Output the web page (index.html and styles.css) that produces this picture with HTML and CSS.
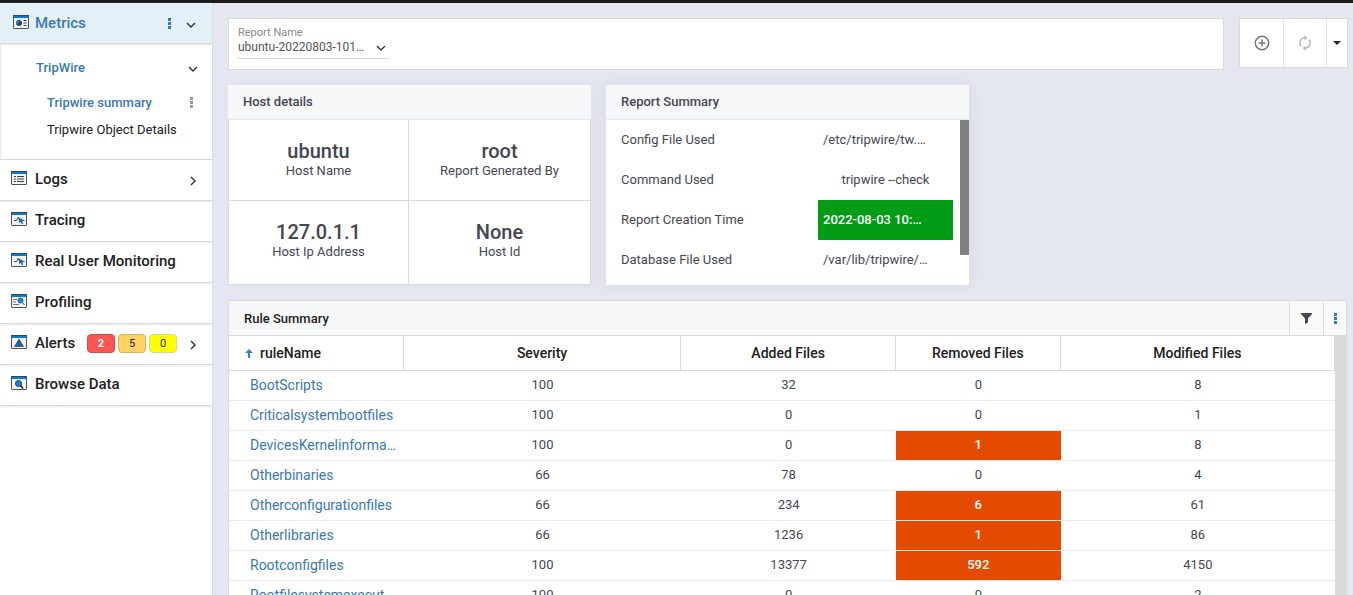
FILE: index.html
```html
<!DOCTYPE html>
<html lang="en">
<head>
<meta charset="utf-8">
<title>Tripwire summary</title>
<link rel="stylesheet" href="styles.css">
</head>
<body>
<svg width="0" height="0" class="defs" aria-hidden="true">
  <symbol id="window" viewBox="0 0 16 14">
    <rect x=".5" y=".5" width="15" height="13" rx=".5" fill="#f4f4f4" stroke="#4a555c"/>
    <rect x="1" y="1" width="14" height="2" fill="#0a78d4"/>
    <path d="M0 .5h16" stroke="#2c4a66"/>
  </symbol>
  <symbol id="down" viewBox="0 0 10 10"><path d="M1 3l4 4 4-4" fill="none" stroke="currentColor" stroke-width="1.4"/></symbol>
  <symbol id="right" viewBox="0 0 10 10"><path d="M3 1l4 4-4 4" fill="none" stroke="currentColor" stroke-width="1.4"/></symbol>
  <symbol id="dots" viewBox="0 0 3 11"><path d="M0 0h3v3H0zM0 4h3v3H0zM0 8h3v3H0z" fill="currentColor" rx="1"/></symbol>
  <symbol id="pulse" viewBox="0 0 16 14"><use href="#window"/><path d="M3 8.500h2.500L7.500 5l1.500 4M11.500 8.500H13.500" fill="none" stroke="#37424a"/><path d="M7.500 5.500l6 3-2.200.7.900 2.600-1.400.5-1-2.500-1.500 1.500z" fill="#1767b3"/></symbol>
</svg>
<div class="topbar"></div>
<div class="app">
  <nav class="sidebar">
    <div class="item active">
      <svg class="icon" viewBox="0 0 16 14"><use href="#window"/><circle cx="6" cy="8" r="3" fill="#37424a"/><path d="M6 8V5a3 3 0 0 0-2.600 4.500z" fill="#1685df"/><path d="M10.500 5.500h3M10.500 8h3M10.500 10.500h3" stroke="#37424a"/></svg>
      <a href="#">Metrics</a>
      <button class="plain" aria-label="Metrics options"><svg class="dots"><use href="#dots"/></svg></button>
      <button class="plain chev" aria-label="Collapse Metrics"><svg class="arrow"><use href="#down"/></svg></button>
    </div>
    <div class="submenu">
      <div class="group"><a href="#">TripWire</a><button class="plain chev" aria-label="Collapse TripWire"><svg class="arrow"><use href="#down"/></svg></button></div>
      <div class="leaf current"><a href="#">Tripwire summary</a><button class="plain muted" aria-label="Tripwire summary options"><svg class="dots"><use href="#dots"/></svg></button></div>
      <div class="leaf"><a href="#">Tripwire Object Details</a></div>
    </div>
    <div class="item">
      <svg class="icon" viewBox="0 0 16 14"><use href="#window"/><path d="M3 5.500h2M6 5.500h7M3 8h2M6 8h7M3 10.500h2M6 10.500h7" stroke="#37424a"/></svg>
      <a href="#">Logs</a>
      <button class="plain chev" aria-label="Expand Logs"><svg class="arrow"><use href="#right"/></svg></button>
    </div>
    <div class="item"><svg class="icon"><use href="#pulse"/></svg><a href="#">Tracing</a></div>
    <div class="item"><svg class="icon"><use href="#pulse"/></svg><a href="#">Real User Monitoring</a></div>
    <div class="item">
      <svg class="icon" viewBox="0 0 16 14"><use href="#window"/><path d="M2 5.500h4M2 8h3M2 10.500h6" stroke="#6c757b"/><circle cx="9.500" cy="6.500" r="2.700" fill="#1685df" stroke="#37688f" stroke-width=".6"/><path d="M11.500 8.500l2 2.500" stroke="#37424a"/></svg>
      <a href="#">Profiling</a>
    </div>
    <div class="item">
      <svg class="icon" viewBox="0 0 16 14"><use href="#window"/><path d="M8 4l4.500 7.500h-9z" fill="#0a70c8" stroke="#37424a" stroke-width=".7"/><path d="M8 7v4.500" stroke="#37424a"/></svg>
      <a href="#">Alerts</a>
      <span class="badges"><span class="badge red">2</span><span class="badge amber">5</span><span class="badge yellow">0</span></span>
      <button class="plain chev" aria-label="Expand Alerts"><svg class="arrow"><use href="#right"/></svg></button>
    </div>
    <div class="item">
      <svg class="icon" viewBox="0 0 16 14"><use href="#window"/><circle cx="7.500" cy="7.500" r="3" fill="#1685df" stroke="#173f60"/><path d="M9.500 9.500l2.500 3" stroke="#1f2a32" stroke-width="1.600"/></svg>
      <a href="#">Browse Data</a>
    </div>
  </nav>
  <main class="main">
    <div class="toolbar">
      <div class="filters">
        <div class="field">
          <label for="report">Report Name</label>
          <div class="picker">
            <select id="report"><option>ubuntu-20220803-101…</option></select>
            <svg class="arrow"><use href="#down"/></svg>
          </div>
        </div>
      </div>
      <div class="actions">
        <button aria-label="Add"><svg width="16" height="16" viewBox="0 0 16 16" fill="none" stroke="#757575" stroke-width="1.500"><circle cx="8" cy="8" r="6.700"/><path d="M8 4.500v7M4.500 8h7"/></svg></button>
        <button aria-label="Refresh"><svg width="14" height="16" viewBox="0 0 14 16"><path d="M3.200 11.500A5.200 5.200 0 0 1 7 2.800M10.800 4.500A5.200 5.200 0 0 1 7 13.200" fill="none" stroke="#bdbdbd" stroke-width="1.600"/><path d="M6.500 0L9.500 2.800l-3 2.800zM7.500 10.400l-3 2.800 3 2.800z" fill="#bdbdbd"/></svg></button>
        <button class="narrow" aria-label="More actions"><svg width="8" height="4" viewBox="0 0 8 4"><path d="M0 0h8L4 4z" fill="#222b30"/></svg></button>
      </div>
    </div>
    <div class="cards">
      <section class="card host">
        <h2>Host details</h2>
        <dl class="facts">
          <div><dd>ubuntu</dd><dt>Host Name</dt></div>
          <div><dd>root</dd><dt>Report Generated By</dt></div>
          <div><dd>127.0.1.1</dd><dt>Host Ip Address</dt></div>
          <div><dd>None</dd><dt>Host Id</dt></div>
        </dl>
      </section>
      <section class="card">
        <h2>Report Summary</h2>
        <div class="summary">
          <dl class="pairs">
            <div><dt>Config File Used</dt><dd>/etc/tripwire/tw.…</dd></div>
            <div><dt>Command Used</dt><dd class="middle">tripwire --check</dd></div>
            <div><dt>Report Creation Time</dt><dd class="ok">2022-08-03 10:…</dd></div>
            <div><dt>Database File Used</dt><dd>/var/lib/tripwire/…</dd></div>
          </dl>
          <div class="scroll"><div class="thumb"></div></div>
        </div>
      </section>
    </div>
    <section class="rules">
      <header>
        <h2>Rule Summary</h2>
        <button aria-label="Filter"><svg width="11" height="11" viewBox="0 0 11 11"><path d="M0 0h11v1L7 5.500V9.500L4 11V5.500L0 1z" fill="#464652"/></svg></button>
        <button class="narrow" aria-label="Rule Summary options"><svg class="dots"><use href="#dots"/></svg></button>
      </header>
      <div class="tablewrap">
        <table>
          <colgroup><col class="c-name"><col class="c-sev"><col class="c-add"><col class="c-rem"><col class="c-mod"></colgroup>
          <thead><tr><th><svg class="sort" width="8" height="9" viewBox="0 0 8 9"><path d="M4 0l4 4H5v5H3V4H0z" fill="#3d7fbd"/></svg>ruleName</th><th>Severity</th><th>Added Files</th><th>Removed Files</th><th>Modified Files</th></tr></thead>
          <tbody>
            <tr><td><a href="#">BootScripts</a></td><td>100</td><td>32</td><td>0</td><td>8</td></tr>
            <tr><td><a href="#">Criticalsystembootfiles</a></td><td>100</td><td>0</td><td>0</td><td>1</td></tr>
            <tr><td><a href="#">DevicesKernelinforma…</a></td><td>100</td><td>0</td><td class="hot">1</td><td>8</td></tr>
            <tr><td><a href="#">Otherbinaries</a></td><td>66</td><td>78</td><td>0</td><td>4</td></tr>
            <tr><td><a href="#">Otherconfigurationfiles</a></td><td>66</td><td>234</td><td class="hot">6</td><td>61</td></tr>
            <tr><td><a href="#">Otherlibraries</a></td><td>66</td><td>1236</td><td class="hot">1</td><td>86</td></tr>
            <tr><td><a href="#">Rootconfigfiles</a></td><td>100</td><td>13377</td><td class="hot">592</td><td>4150</td></tr>
            <tr><td><a href="#">Rootfilesystemexecut</a></td><td>100</td><td>0</td><td>0</td><td>2</td></tr>
          </tbody>
        </table>
        <div class="track"></div>
      </div>
    </section>
  </main>
</div>
</body>
</html>
```
FILE: styles.css
```css
* { box-sizing: border-box; }
body {
  margin: 0;
  height: 100vh;
  display: flex;
  flex-direction: column;
  overflow: hidden;
  background: #e4e7ef;
  color: #464652;
  font: 13px/16px Roboto, sans-serif;
}
.defs { position: absolute; }
a { color: inherit; text-decoration: none; }
h2, dl, dd { margin: 0; }
button {
  display: flex;
  align-items: center;
  justify-content: center;
  padding: 0;
  border: 0;
  background: none;
  color: inherit;
}
.topbar { flex: 0 0 3px; background: #1c1c1c; }
.app { flex: 1; display: flex; min-height: 0; }

.sidebar {
  flex: 0 0 213px;
  background: #fff;
  border-right: 1px solid #dadada;
  color: #212121;
}
.item {
  display: flex;
  align-items: center;
  height: 41px;
  padding: 0 14px 2px 11px;
  border-bottom: 1px solid #d8d8d8;
  box-shadow: 0 1px 2px #e8e8e8;
  font-size: 15px;
  font-weight: 500;
}
.item.active { background: #e3f0f7; color: #3a78b5; padding: 0 14px 0 13px; }
.icon { width: 16px; height: 14px; flex: none; margin: 0 8px 2px 0; }
.item.active .icon { margin-right: 6px; }
.item a, .group a, .leaf a { margin-right: auto; }
.arrow { width: 10px; height: 10px; }
.dots { width: 3px; height: 11px; }
.chev { color: #303030; }
.item .chev { padding-top: 4px; }
.item.active .chev { margin-left: 15px; margin-right: 2px; }
.badges { display: flex; gap: 3px; margin-right: 11px; }
.badge {
  width: 28px;
  height: 19px;
  border: 1px solid;
  border-radius: 4px;
  font-size: 11px;
  font-weight: 400;
  line-height: 17px;
  text-align: center;
}
.badge.red { background: #fb5750; border-color: #d84b45; color: #fff; font-weight: 700; }
.badge.amber { background: #ffd261; border-color: #d9b354; color: #212121; }
.badge.yellow { background: #ff0; border-color: #d6d68a; color: #212121; }
.submenu {
  padding: 4px 14px 16px 35px;
  border-left: 1px solid #e4e7f5;
  border-bottom: 1px solid #d8d8d8;
}
.group, .leaf { display: flex; align-items: center; height: 27px; }
.group { height: 40px; margin-bottom: 1px; color: #3a78b5; font-weight: 500; }
.group .chev { padding-top: 2px; }
.leaf { padding: 0 5px 0 11px; }
.current { color: #3a78b5; font-weight: 500; }
.muted { color: #9a9a9a; }

.main {
  flex: 1;
  min-width: 0;
  display: flex;
  flex-direction: column;
  gap: 15px;
  padding: 15px 6px 0 15px;
}
.toolbar { display: flex; gap: 15px; align-items: flex-start; margin-right: -1px; }
.filters, .actions { background: #fff; border: 1px solid #dadada; }
.filters { flex: 1; height: 52px; padding: 6px 9px; }
.field { width: 152px; border-bottom: 1px solid #d8d8d8; }
.field label { display: block; font-size: 11px; line-height: 15px; color: #8a8a8a; }
.picker { display: flex; align-items: center; padding-bottom: 3px; }
.picker select {
  flex: 1;
  min-width: 0;
  appearance: none;
  border: 0;
  padding: 0;
  background: none;
  color: #555;
  font: 12px/15px Roboto, sans-serif;
}
.picker .arrow { margin-right: 4px; color: #333; }
.actions { display: flex; height: 50px; }
.actions button { width: 43px; }
.actions button + button { border-left: 1px solid #e2e2e2; }
.actions .narrow { width: 21px; }

.cards { display: grid; grid-template-columns: repeat(3, 1fr); gap: 15px; }
.card { background: #fff; box-shadow: 0 0 14px rgba(0, 0, 0, 0.07); }
.host { box-shadow: 2px 0 12px rgba(0, 0, 0, 0.03); }
h2 { font-size: 13px; font-weight: 500; }
.card h2 {
  height: 35px;
  padding: 0 15px;
  line-height: 33px;
  background: #f7f8fa;
  border-bottom: 1px solid #e8e8e8;
}
.facts {
  display: grid;
  grid-template-columns: 180px 1fr;
  border: 1px solid #dadada;
  border-top: 0;
}
.facts div {
  display: flex;
  flex-direction: column;
  justify-content: center;
  height: 81px;
  padding-bottom: 2px;
  text-align: center;
  border-bottom: 1px solid #dadada;
}
.facts div:nth-child(odd) { border-right: 1px solid #dadada; }
.facts div:nth-child(n + 3) { height: 83px; padding-bottom: 5px; border-bottom: 0; }
.facts dd { font-size: 20px; line-height: 24px; font-weight: 500; }
.summary { display: flex; height: 165px; overflow: hidden; }
.pairs { flex: 1; padding: 0 7px 0 15px; }
.pairs div { display: flex; height: 40px; line-height: 40px; justify-content: space-between; }
.pairs dd { width: 135px; padding: 0 5px; white-space: nowrap; }
.pairs .middle { text-align: center; }
.ok { background: #029c17; color: #fff; font-weight: 500; }
.scroll { width: 9px; }
.thumb { height: 135px; background: #808080; }

.rules {
  flex: 1;
  min-height: 0;
  display: flex;
  flex-direction: column;
  overflow: hidden;
  background: #fff;
  border: 1px solid #dadada;
  border-bottom: 0;
}
.rules header {
  flex: none;
  height: 35px;
  display: flex;
  background: #f7f8fa;
  border-bottom: 1px solid #dadada;
}
.rules h2 { flex: 1; padding-left: 15px; line-height: 36px; color: #212121; }
.rules header button { width: 34px; border-left: 1px solid #dadada; background: #fafafa; }
.rules header .narrow { width: 23px; color: #3a78b5; }
.tablewrap { flex: 1; min-height: 0; display: flex; align-items: flex-start; }
.track { flex: 0 0 11px; align-self: stretch; background: #dadada; }
table {
  flex: 1;
  width: 100%;
  table-layout: fixed;
  border-collapse: separate;
  border-spacing: 0;
}
.c-name { width: 15.8%; }
.c-sev { width: 25.1%; }
.c-add { width: 19.4%; }
.c-rem { width: 14.9%; }
.c-mod { width: 24.8%; }
th {
  height: 35px;
  padding: 0;
  font-size: 14px;
  font-weight: 500;
  color: #212121;
  border-right: 1px solid #dadada;
  border-bottom: 1px solid #dadada;
}
td {
  height: 30px;
  padding: 0 0 2px;
  text-align: center;
  border-bottom: 1px solid #ebebeb;
}
th:first-child { text-align: left; padding-left: 16px; }
td:first-child { text-align: left; padding-left: 21px; color: #3a78b5; font-size: 14px; white-space: nowrap; }
.sort { margin-right: 7px; }
.hot { background: #e54b00; background-clip: padding-box; color: #fff; font-weight: 500; }
```
